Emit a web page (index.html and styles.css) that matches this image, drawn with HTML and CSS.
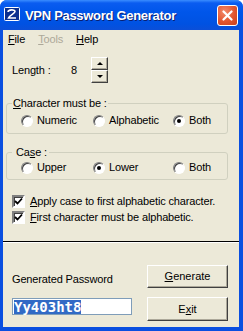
FILE: index.html
```html
<!DOCTYPE html>
<html lang="en">
<head>
    <meta charset="UTF-8">
    <title>VPN Password Generator</title>
    <link rel="stylesheet" href="styles.css">
</head>
<body>

<div class="window">
    <div class="titlebar">
        <svg class="app-icon" width="16" height="14" viewBox="0 0 16 14">
            <rect x="0.5" y="0.5" width="15" height="13" rx="1" fill="#0b2f8f" stroke="#fff"/>
            <path d="M4 5 C4 2.5 11 2 11 4.5 C11 6.5 6 8 4.5 11 L12 11" fill="none" stroke="#fff" stroke-width="1.6"/>
        </svg>
        <span class="title">VPN Password Generator</span>
        <button class="close-btn" aria-label="Close">
            <svg width="11" height="11" viewBox="0 0 11 11">
                <path d="M1.5 1.5 L9.5 9.5 M9.5 1.5 L1.5 9.5" stroke="#fff" stroke-width="2.2" stroke-linecap="round"/>
            </svg>
        </button>
    </div>

    <div class="client">
        <div class="menubar">
            <span class="menu-item"><u>F</u>ile</span>
            <span class="menu-item disabled"><u>T</u>ools</span>
            <span class="menu-item"><u>H</u>elp</span>
        </div>

        <div class="length-row">
            <span class="length-label">Length :</span>
            <span class="length-value">8</span>
            <div class="spin">
                <button class="spin-btn"><span class="arrow-up"></span></button>
                <button class="spin-btn"><span class="arrow-down"></span></button>
            </div>
        </div>

        <fieldset class="group group-chars">
            <legend><u>C</u>haracter must be :</legend>
            <div class="radio-row">
                <label class="radio"><span class="radio-dot"></span>Numeric</label>
                <label class="radio"><span class="radio-dot"></span>Alphabetic</label>
                <label class="radio"><span class="radio-dot checked"></span>Both</label>
            </div>
        </fieldset>

        <fieldset class="group group-case">
            <legend>Ca<u>s</u>e :</legend>
            <div class="radio-row">
                <label class="radio"><span class="radio-dot"></span>Upper</label>
                <label class="radio"><span class="radio-dot checked"></span>Lower</label>
                <label class="radio"><span class="radio-dot"></span>Both</label>
            </div>
        </fieldset>

        <div class="checks">
            <label class="check"><span class="check-box">
                <svg width="9" height="9" viewBox="0 0 9 9"><path d="M1 4 L3.5 6.5 L8 1.5" fill="none" stroke="#000" stroke-width="1.8"/></svg>
            </span><u>A</u>pply case to first alphabetic character.</label>
            <label class="check"><span class="check-box">
                <svg width="9" height="9" viewBox="0 0 9 9"><path d="M1 4 L3.5 6.5 L8 1.5" fill="none" stroke="#000" stroke-width="1.8"/></svg>
            </span><u>F</u>irst character must be alphabetic.</label>
        </div>

        <div class="separator"></div>

        <div class="output">
            <span class="output-label">Generated Password</span>
            <button class="push-btn"><u>G</u>enerate</button>
            <div class="password-box"><span class="selected">Yy403ht8</span></div>
            <button class="push-btn">E<u>x</u>it</button>
        </div>
    </div>
</div>

</body>
</html>
```

FILE: styles.css
```css
body {
    margin: 0;
    font-family: "Liberation Sans", Arial, sans-serif;
    font-size: 11px;
    line-height: 13px;
    letter-spacing: -0.15px;
    color: #000;
}
.window {
    width: 243px;
    height: 331px;
    display: flex;
    flex-direction: column;
    background: #0a4fe0;
    border-radius: 7px 7px 0 0;
    overflow: hidden;
}
.titlebar {
    height: 30px;
    flex: none;
    display: flex;
    align-items: center;
    padding: 0 5px 0 4px;
    background: linear-gradient(#3a8dff 0, #0a5cf0 3px, #0056ea 12px, #0052e2 24px, #0b4fd8 30px);
}
.app-icon {
    flex: none;
    margin-top: -2px;
}
.title {
    flex: 1;
    margin-left: 5px;
    color: #fff;
    font-weight: bold;
    font-size: 13px;
    letter-spacing: -0.3px;
    text-shadow: 1px 1px #0a1f70;
}
.close-btn {
    width: 21px;
    height: 21px;
    padding: 0;
    border: 1px solid #fff;
    border-radius: 3px;
    background: radial-gradient(circle at 35% 30%, #f28a6b, #e2552e 55%, #c8401c);
    display: flex;
    align-items: center;
    justify-content: center;
}
.client {
    flex: 1;
    margin: 0 4px 4px 3px;
    background: #ece9d8;
    display: flex;
    flex-direction: column;
}
.menubar {
    height: 18px;
    display: flex;
    align-items: center;
    padding-left: 5px;
}
.menu-item {
    margin-right: 13px;
}
.menu-item.disabled {
    color: #aca899;
}
.length-row {
    display: flex;
    align-items: center;
    margin-top: 9px;
    padding-left: 9px;
}
.length-label {
    width: 59px;
}
.length-value {
    width: 20px;
}
.spin {
    display: flex;
    flex-direction: column;
}
.spin-btn {
    width: 17px;
    height: 13px;
    padding: 0;
    background: #ece9d8;
    border: 1px solid;
    border-color: #fff #404040 #404040 #fff;
    box-shadow: inset -1px -1px #aca899;
    display: flex;
    align-items: center;
    justify-content: center;
}
.arrow-up {
    border: 3px solid transparent;
    border-bottom: 3px solid #000;
    border-top: 0;
}
.arrow-down {
    border: 3px solid transparent;
    border-top: 3px solid #000;
    border-bottom: 0;
}
.group {
    margin: 14px 11px 0 3px;
    padding: 4px 0 6px 5px;
    border: 1px solid #d0d0bf;
    border-radius: 3px;
}
.group legend {
    padding: 0 1px;
}
.group-case {
    margin-top: 12px;
    padding-top: 2px;
    padding-bottom: 5px;
}
.group-case legend {
    padding: 0 2px 0 4px;
}
.radio-row {
    display: grid;
    grid-template-columns: 72px 80px auto;
    padding-left: 9px;
}
.radio {
    display: flex;
    align-items: center;
}
.radio-dot {
    width: 10px;
    height: 10px;
    margin-right: 4px;
    border-radius: 50%;
    background: #fff;
    border: 1px solid;
    border-color: #808080 #fff #fff #808080;
    box-shadow: inset 1px 1px #404040;
    position: relative;
}
.radio-dot.checked::after {
    content: "";
    position: absolute;
    left: 3px;
    top: 3px;
    width: 4px;
    height: 4px;
    border-radius: 50%;
    background: #000;
}
.checks {
    display: flex;
    flex-direction: column;
    gap: 3px;
    margin-top: 15px;
    padding-left: 9px;
}
.check {
    display: flex;
    align-items: center;
}
.check-box {
    width: 9px;
    height: 9px;
    margin-right: 5px;
    padding: 0;
    background: #fff;
    border: 2px solid;
    border-color: #808080 #fff #fff #808080;
    box-shadow: inset 1px 1px #404040;
    display: flex;
    align-items: center;
    justify-content: center;
}
.separator {
    margin-top: 17px;
    border-top: 1px solid #000;
    border-bottom: 1px solid #fff;
}
.output {
    display: grid;
    grid-template-columns: 135px 81px;
    grid-template-rows: 23px 24px;
    row-gap: 9px;
    margin-top: 22px;
    padding-left: 9px;
}
.output-label {
    align-self: center;
    margin-top: 6px;
}
.push-btn {
    font: inherit;
    padding: 0;
    background: #ece9d8;
    border: 1px solid;
    border-color: #fff #404040 #404040 #fff;
    box-shadow: inset -1px -1px #aca899;
}
.password-box {
    width: 117px;
    height: 15px;
    margin-top: 1px;
    background: #fff;
    border: 1px solid #7f9db9;
    padding-left: 1px;
    display: flex;
    align-items: center;
}
.selected {
    background: #316ac5;
    color: #fff;
    font-family: "DejaVu Sans Mono", "Liberation Mono", monospace;
    font-weight: bold;
    font-size: 14px;
    line-height: 14px;
    letter-spacing: 0;
}
```
